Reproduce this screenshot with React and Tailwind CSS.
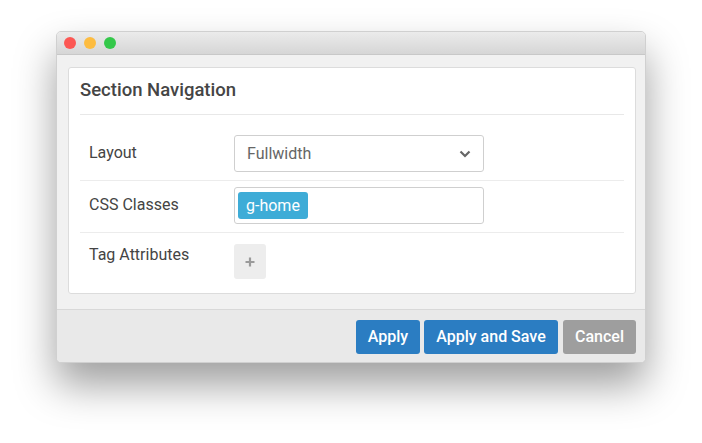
import React from "react";

// Section settings dialog, drawn as a mac-style window
export default function App() {
  const rows = [
    { label: "Layout", kind: "select" },
    { label: "CSS Classes", kind: "tags" },
    { label: "Tag Attributes", kind: "add" },
  ];

  return (
    <div className="w-[702px] h-[443px] bg-white pt-[31px] pl-[56px] font-['Roboto',sans-serif]">
      <div className="w-[590px] h-[332px] flex flex-col rounded-[5px] overflow-hidden bg-[#f1f1f1] shadow-[0_22px_40px_rgba(0,0,0,0.38)] border border-[#d0d0d0]">
        {/* title bar */}
        <div className="h-[23px] flex items-center gap-2 pl-[7px] bg-gradient-to-b from-[#ebebeb] to-[#d6d6d6] border-b border-[#c8c8c8]">
          <span className="w-3 h-3 rounded-full bg-[#fc5753]" />
          <span className="w-3 h-3 rounded-full bg-[#fdbc40]" />
          <span className="w-3 h-3 rounded-full bg-[#34c84a]" />
        </div>

        {/* body */}
        <div className="pt-[12px] pl-[11px] pr-[9px]">
          <div className="h-[227px] bg-white border border-[#dcdcdc] rounded-[3px] px-[11px]">
            <div className="h-[47px] flex items-center border-b border-[#e8e8e8]">
              <h1 className="text-[18.5px] font-medium text-[#454545]">Section Navigation</h1>
            </div>
            <div className="pt-[20px]">
              {rows.map((row, i) => (
                <div
                  key={row.label}
                  className={
                    i === 0
                      ? "flex pb-[8px] border-b border-[#ececec]"
                      : i === 1
                      ? "flex pt-[6px] pb-[8px] border-b border-[#ececec]"
                      : "flex pt-[11px]"
                  }
                >
                  <div
                    className={
                      i === 2
                        ? "w-[154px] pl-[9px] text-[16px] text-[#444] leading-[22px]"
                        : "w-[154px] pl-[9px] pb-[2px] text-[16px] text-[#444] h-[37px] flex items-center"
                    }
                  >
                    {row.label}
                  </div>
                  {row.kind === "select" && (
                    <div className="w-[250px] h-[37px] border border-[#cfcfcf] rounded-[3px] flex items-center justify-between pl-[12px] pr-[12px]">
                      <span className="text-[16px] text-[#666]">Fullwidth</span>
                      <svg width="12" height="8" viewBox="0 0 12 8">
                        <path d="M1.5 1.5 L6 6 L10.5 1.5" fill="none" stroke="#666" strokeWidth="2.2" />
                      </svg>
                    </div>
                  )}
                  {row.kind === "tags" && (
                    <div className="w-[250px] h-[37px] border border-[#cfcfcf] rounded-[3px] flex items-center pl-[3px]">
                      <span className="h-[27px] px-[8px] rounded-[3px] bg-[#3eacd7] text-white text-[16px] flex items-center">
                        g-home
                      </span>
                    </div>
                  )}
                  {row.kind === "add" && (
                    <button className="w-[32px] h-[35px] rounded-[3px] bg-[#ededed] flex items-center justify-center">
                      <svg width="10" height="10" viewBox="0 0 10 10">
                        <path d="M5 0.5 V9.5 M0.5 5 H9.5" stroke="#9a9a9a" strokeWidth="2.2" />
                      </svg>
                    </button>
                  )}
                </div>
              ))}
            </div>
          </div>
        </div>

        {/* footer */}
        <div className="mt-[15px] flex-1 bg-[#e9e9e9] border-t border-[#d8d8d8] flex justify-end items-start pt-[10px] pr-[9px] gap-[4px]">
          <button className="w-[64px] h-[34px] rounded-[3px] bg-[#2b7dc2] text-white text-[16px] font-medium">Apply</button>
          <button className="w-[134px] h-[34px] rounded-[3px] bg-[#2b7dc2] text-white text-[16px] font-medium">Apply and Save</button>
          <button className="ml-[1px] w-[73px] h-[34px] rounded-[3px] bg-[#9e9e9e] text-white text-[16px] font-medium">Cancel</button>
        </div>
      </div>
    </div>
  );
}
